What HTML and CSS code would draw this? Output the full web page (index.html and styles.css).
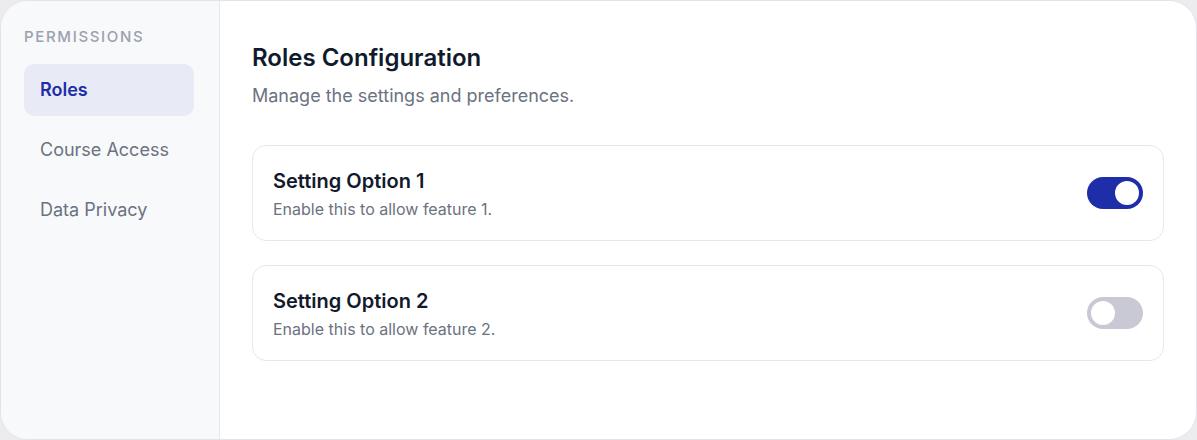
FILE: index.html
```html
<!DOCTYPE html>
<html lang="en">
<head>
    <meta charset="UTF-8">
    <meta name="viewport" content="width=device-width, initial-scale=1.0">
    <title>Roles Configuration</title>
    <link rel="stylesheet" href="styles.css">
</head>
<body>

    <div class="panel">
        <aside class="sidebar">
            <div class="sidebar-label">Permissions</div>
            <nav class="nav">
                <a class="nav-item active" href="#">Roles</a>
                <a class="nav-item" href="#">Course Access</a>
                <a class="nav-item" href="#">Data Privacy</a>
            </nav>
        </aside>

        <main class="content">
            <h2 class="title">Roles Configuration</h2>
            <p class="subtitle">Manage the settings and preferences.</p>

            <div class="settings">
                <div class="setting-card">
                    <div class="setting-text">
                        <h3>Setting Option 1</h3>
                        <p>Enable this to allow feature 1.</p>
                    </div>
                    <button class="toggle on" aria-label="Toggle setting 1"><span class="knob"></span></button>
                </div>

                <div class="setting-card">
                    <div class="setting-text">
                        <h3>Setting Option 2</h3>
                        <p>Enable this to allow feature 2.</p>
                    </div>
                    <button class="toggle" aria-label="Toggle setting 2"><span class="knob"></span></button>
                </div>
            </div>
        </main>
    </div>

</body>
</html>
```

FILE: styles.css
```css
* {
    margin: 0;
    padding: 0;
    box-sizing: border-box;
}

body {
    font-family: 'Inter', 'Noto Sans', sans-serif;
    background: #ececef;
    height: 100vh;
    overflow: hidden;
}

.panel {
    display: flex;
    height: 440px;
    background: #ffffff;
    border: 1px solid #e3e4ea;
    border-radius: 28px;
    overflow: hidden;
}

.sidebar {
    width: 219px;
    flex-shrink: 0;
    background: #f8f9fb;
    border-right: 1px solid #e5e7ec;
    padding: 24px 25px 24px 23px;
}

.sidebar-label {
    font-size: 15px;
    line-height: 24px;
    font-weight: 500;
    letter-spacing: 0.11em;
    text-transform: uppercase;
    color: #9ba1ad;
    margin-bottom: 15px;
}

.nav {
    display: flex;
    flex-direction: column;
    gap: 8px;
}

.nav-item {
    display: flex;
    align-items: center;
    height: 52px;
    padding: 0 16px 2px;
    border-radius: 10px;
    font-size: 18px;
    color: #6b7280;
    text-decoration: none;
}

.nav-item.active {
    background: #e8eaf5;
    color: #1e2da8;
    font-weight: 600;
}

.content {
    flex: 1;
    padding: 41px 32px 32px 32px;
}

.title {
    font-size: 24px;
    line-height: 32px;
    font-weight: 600;
    color: #0f1b2d;
}

.subtitle {
    font-size: 18px;
    line-height: 28px;
    color: #6b7280;
    margin-top: 8px;
}

.settings {
    display: flex;
    flex-direction: column;
    gap: 24px;
    margin-top: 35px;
}

.setting-card {
    display: flex;
    align-items: center;
    justify-content: space-between;
    height: 96px;
    padding: 0 20px;
    border: 1.5px solid #e6e7ec;
    border-radius: 14px;
}

.setting-text {
    padding-top: 2px;
}

.setting-text h3 {
    font-size: 20px;
    line-height: 28px;
    font-weight: 600;
    color: #121a2c;
}

.setting-text p {
    font-size: 16px;
    line-height: 24px;
    color: #6b7280;
    margin-top: 2px;
}

.toggle {
    position: relative;
    width: 56px;
    height: 32px;
    border: none;
    border-radius: 16px;
    background: #c9c9d6;
    cursor: pointer;
}

.toggle .knob {
    position: absolute;
    top: 4px;
    left: 4px;
    width: 24px;
    height: 24px;
    border-radius: 50%;
    background: #ffffff;
    transition: left 0.2s;
}

.toggle.on {
    background: #1e2da8;
}

.toggle.on .knob {
    left: 28px;
}
```
